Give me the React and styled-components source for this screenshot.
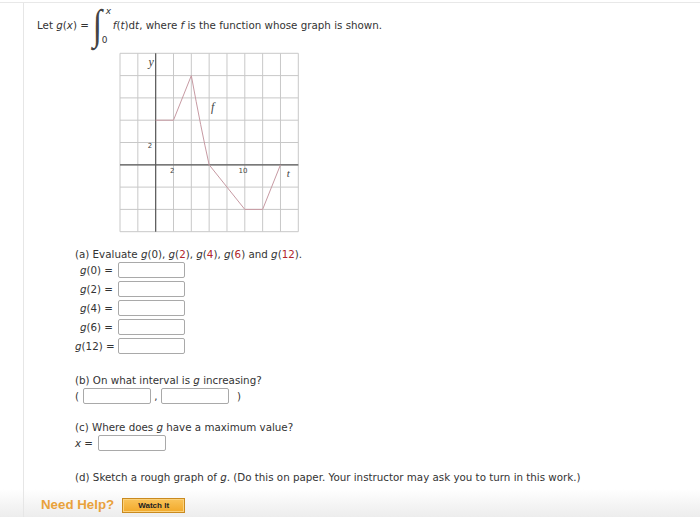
import React from 'react';
import styled, { createGlobalStyle } from 'styled-components';

const GlobalStyle = createGlobalStyle`
    html, body {
        margin: 0;
        padding: 0;
        background: #fff;
    }
    body {
        font-family: "DejaVu Sans", Verdana, sans-serif;
        color: #333;
    }
`;

const Page = styled.div`
    width: 700px;
    height: 515px;
    overflow: hidden;
    box-sizing: border-box;
    border-top: 1px solid #e8e8e8;
    margin-top: 2px;
    background: linear-gradient(to bottom, #fff 0px, #fff 486px, #ececec 515px);
`;

const Column = styled.div`
    margin-left: 23px;
    height: 100%;
    border-left: 1px solid #e6e6e6;
    box-sizing: border-box;
    padding: 0 0 0 13px;
`;

const Statement = styled.div`
    display: flex;
    align-items: center;
    font-size: 10.3px;
    height: 44px;
`;

const Ital = styled.span`
    font-style: italic;
`;

const Red = styled.span`
    color: #b0262b;
`;

const Integral = styled.span`
    position: relative;
    display: inline-block;
    width: 17px;
    height: 44px;
    margin: 0 3px 0 4px;
`;

const IntSign = styled.span`
    position: absolute;
    left: 0;
    top: 0;
    font-family: "Liberation Serif", serif;
    font-size: 34px;
    line-height: 44px;
    color: #444;
    transform: scaleY(1.25);
    transform-origin: center;
`;

const Limit = styled.span`
    position: absolute;
    font-family: "DejaVu Sans", sans-serif;
    font-size: 9px;
    line-height: 10px;
    left: ${p => p.$left}px;
    top: ${p => p.$top}px;
    font-style: ${p => (p.$italic ? 'italic' : 'normal')};
`;

const GraphWrap = styled.div`
    margin: 4px 0 0 81px;
    height: 184px;
`;

const Part = styled.div`
    margin-left: 38px;
    margin-top: ${p => p.$top}px;
    font-size: 10.3px;
`;

const PartTitle = styled.div`
    height: 14px;
    line-height: 14px;
    white-space: nowrap;
`;

const AnswerGrid = styled.div`
    display: grid;
    grid-template-columns: 38px 67px;
    column-gap: 5px;
    row-gap: 3px;
    align-items: center;
    margin-top: 1px;
`;

const Label = styled.span`
    text-align: right;
    white-space: nowrap;
    line-height: 16px;
    height: 16px;
`;

const Box = styled.div`
    width: ${p => p.$w || 67}px;
    height: 16px;
    box-sizing: border-box;
    border: 1px solid #a9a9a9;
    border-radius: 2px;
    background: #fff;
`;

const Inline = styled.div`
    display: flex;
    align-items: center;
    gap: ${p => p.$gap || 0}px;
    height: 16px;
    line-height: 16px;
    margin-top: 1px;
`;

const Paren = styled.span`
    width: ${p => p.$w}px;
    text-align: ${p => p.$align || 'left'};
`;

const HelpBar = styled.div`
    display: flex;
    align-items: center;
    height: 16px;
    margin: 13px 0 0 4px;
    gap: 8px;
`;

const NeedHelp = styled.span`
    font-family: "Liberation Sans", Arial, sans-serif;
    font-weight: bold;
    font-size: 13.3px;
    line-height: 16px;
    color: #e9a23b;
`;

const WatchButton = styled.div`
    width: 63px;
    height: 15px;
    box-sizing: border-box;
    border: 1px solid #c98a1f;
    background: linear-gradient(to bottom, #fac45a, #f2a92a);
    box-shadow: inset 0 0 0 1px #fbd27d;
    display: flex;
    align-items: center;
    justify-content: center;
    font-family: "Liberation Sans", Arial, sans-serif;
    font-weight: bold;
    font-size: 8px;
    color: #222;
`;

const X0 = 2;
const SX = 17.83;
const Y0 = 2.3;
const SY = 22.3;
const px = t => X0 + ((t + 4) / 2) * SX;
const py = y => Y0 + ((10 - y) / 2) * SY;

function Graph() {
    const verticals = Array.from({ length: 11 }, (_, i) => X0 + i * SX);
    const horizontals = Array.from({ length: 9 }, (_, i) => Y0 + i * SY);
    const head = [[0, 4], [2, 4], [4, 8]].map(([t, y]) => `${px(t)},${py(y)}`).join(' ');
    const tail = [[6, 0], [10, -4], [12, -4], [14, 0]].map(([t, y]) => `${px(t)},${py(y)}`).join(' ');
    return (
        <svg width="184" height="184" viewBox="0 0 184 184">
            {verticals.map(x => (
                <line key={'v' + x} x1={x} y1={Y0} x2={x} y2={Y0 + 8 * SY} stroke="#c8c8c8" strokeWidth="1" />
            ))}
            {horizontals.map(y => (
                <line key={'h' + y} x1={X0} y1={y} x2={X0 + 10 * SX} y2={y} stroke="#c8c8c8" strokeWidth="1" />
            ))}
            <line x1={px(0)} y1={Y0} x2={px(0)} y2={Y0 + 8 * SY} stroke="#5a5a5a" strokeWidth="1.2" />
            <line x1={X0} y1={py(0)} x2={X0 + 10 * SX} y2={py(0)} stroke="#5a5a5a" strokeWidth="1.2" />
            <polyline points={head} fill="none" stroke="#c79aa3" strokeWidth="1" />
            <path
                d={`M${px(4)},${py(8)} Q${px(5.1)},${py(3.2)} ${px(6)},${py(0)}`}
                fill="none"
                stroke="#c79aa3"
                strokeWidth="1"
            />
            <polyline points={tail} fill="none" stroke="#c79aa3" strokeWidth="1" />
            <text x={px(-0.8)} y={py(8.85)} fontFamily="'Liberation Serif', serif" fontStyle="italic" fontSize="12" fill="#444">y</text>
            <text x={px(-0.9)} y={py(1.55)} fontFamily="'DejaVu Sans', sans-serif" fontSize="7" fill="#444">2</text>
            <text x={px(1.6)} y={py(-0.75)} fontFamily="'DejaVu Sans', sans-serif" fontSize="7" fill="#444">2</text>
            <text x={px(9.3)} y={py(-0.7)} fontFamily="'DejaVu Sans', sans-serif" fontSize="7" fill="#444">10</text>
            <text x={px(14.7)} y={py(-1.1)} fontFamily="'Liberation Serif', serif" fontStyle="italic" fontSize="11" fill="#444">t</text>
            <text x={px(6.2)} y={py(4.8)} fontFamily="'Liberation Serif', serif" fontStyle="italic" fontSize="12" fill="#444">f</text>
        </svg>
    );
}

const aRows = ['0', '2', '4', '6', '12'];

function App() {
    return (
        <Page>
            <GlobalStyle />
            <Column>
                <Statement>
                    <span>Let <Ital>g</Ital>(<Ital>x</Ital>) =</span>
                    <Integral>
                        <IntSign>∫</IntSign>
                        <Limit $left={13} $top={3} $italic>x</Limit>
                        <Limit $left={9} $top={32}>0</Limit>
                    </Integral>
                    <span><Ital>f</Ital>(<Ital>t</Ital>)d<Ital>t</Ital>, where <Ital>f</Ital> is the function whose graph is shown.</span>
                </Statement>

                <GraphWrap>
                    <Graph />
                </GraphWrap>

                <Part $top={12}>
                    <PartTitle>
                        (a) Evaluate <Ital>g</Ital>(0), <Ital>g</Ital>(<Red>2</Red>), <Ital>g</Ital>(<Red>4</Red>), <Ital>g</Ital>(<Red>6</Red>) and <Ital>g</Ital>(<Red>12</Red>).
                    </PartTitle>
                    <AnswerGrid>
                        {aRows.map(arg => (
                            <React.Fragment key={arg}>
                                <Label><Ital>g</Ital>({arg}) =</Label>
                                <Box />
                            </React.Fragment>
                        ))}
                    </AnswerGrid>
                </Part>

                <Part $top={19}>
                    <PartTitle>(b) On what interval is <Ital>g</Ital> increasing?</PartTitle>
                    <Inline>
                        <Paren $w={8}>(</Paren>
                        <Box $w={68} />
                        <Paren $w={10} $align="center">,</Paren>
                        <Box $w={68} />
                        <Paren $w={12} $align="right">)</Paren>
                    </Inline>
                </Part>

                <Part $top={16}>
                    <PartTitle>(c) Where does <Ital>g</Ital> have a maximum value?</PartTitle>
                    <Inline $gap={5}>
                        <span><Ital>x</Ital> =</span>
                        <Box $w={68} />
                    </Inline>
                </Part>

                <Part $top={19}>
                    <PartTitle>(d) Sketch a rough graph of <Ital>g</Ital>. (Do this on paper. Your instructor may ask you to turn in this work.)</PartTitle>
                </Part>

                <HelpBar>
                    <NeedHelp>Need Help?</NeedHelp>
                    <WatchButton>Watch It</WatchButton>
                </HelpBar>
            </Column>
        </Page>
    );
}

export default App;
